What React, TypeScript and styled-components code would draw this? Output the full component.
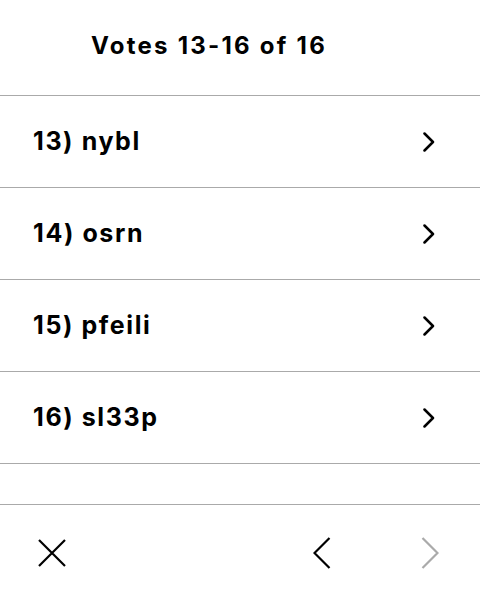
import React from "react";
import styled, { createGlobalStyle } from "styled-components";

const Global = createGlobalStyle`
  html, body { margin: 0; padding: 0; background: #fff; }
  body { font-family: Inter, "Noto Sans", sans-serif; color: #000; }
`;

const Page = styled.div`
  width: 480px;
  height: 600px;
  display: flex;
  flex-direction: column;
  overflow: hidden;
`;

const Header = styled.div`
  height: 95px;
  display: flex;
  align-items: center;
  padding-left: 91px;
  border-bottom: 1px solid #aaa;
  box-sizing: content-box;
`;

const Title = styled.h1`
  margin: 0;
  font-size: 24px;
  font-weight: 700;
  letter-spacing: 2.25px;
  line-height: 1;
  padding-bottom: 4px;
`;

const List = styled.ul`
  list-style: none;
  margin: 0;
  padding: 0;
`;

const Row = styled.li`
  height: 91px;
  display: flex;
  align-items: center;
  justify-content: space-between;
  padding: 0 45px 0 33px;
  border-bottom: 1px solid #aaa;
`;

const Label = styled.span`
  font-size: 25px;
  font-weight: 700;
  letter-spacing: 1.6px;
  line-height: 1;
`;

const Spacer = styled.div`
  height: 40px;
  border-bottom: 1px solid #aaa;
`;

const Footer = styled.div`
  flex: 1;
  display: flex;
  align-items: center;
  padding: 0 20px 0 22px;
`;

const IconButton = styled.button<{ $disabled?: boolean }>`
  width: 60px;
  height: 60px;
  border: none;
  background: none;
  padding: 0;
  display: flex;
  align-items: center;
  justify-content: center;
  color: ${(p) => (p.$disabled ? "#aaa" : "#000")};
`;

const Grow = styled.div`
  flex: 1;
`;

const NavGap = styled.div`
  width: 48px;
`;

const RowChevron = () => (
  <svg width="12" height="20" viewBox="0 0 12 20" fill="none">
    <path d="M1.5 1.5 L10 10 L1.5 18.5" stroke="currentColor" strokeWidth="2.5" strokeLinecap="round" strokeLinejoin="round" />
  </svg>
);

const CloseIcon = () => (
  <svg width="28" height="28" viewBox="0 0 28 28" fill="none">
    <path d="M1 1 L27 27 M27 1 L1 27" stroke="currentColor" strokeWidth="2.2" />
  </svg>
);

const NavChevron = ({ dir }: { dir: "left" | "right" }) => (
  <svg width="18" height="32" viewBox="0 0 18 32" fill="none">
    <path
      d={dir === "left" ? "M16.5 1 L1.5 16 L16.5 31" : "M1.5 1 L16.5 16 L1.5 31"}
      stroke="currentColor"
      strokeWidth="2.2"
    />
  </svg>
);

const votes = ["13) nybl", "14) osrn", "15) pfeili", "16) sl33p"];

export default function App() {
  return (
    <Page>
      <Global />
      <Header>
        <Title>Votes 13-16 of 16</Title>
      </Header>
      <List>
        {votes.map((v) => (
          <Row key={v}>
            <Label>{v}</Label>
            <RowChevron />
          </Row>
        ))}
      </List>
      <Spacer />
      <Footer>
        <IconButton aria-label="Close">
          <CloseIcon />
        </IconButton>
        <Grow />
        <IconButton aria-label="Previous">
          <NavChevron dir="left" />
        </IconButton>
        <NavGap />
        <IconButton aria-label="Next" $disabled>
          <NavChevron dir="right" />
        </IconButton>
      </Footer>
    </Page>
  );
}
